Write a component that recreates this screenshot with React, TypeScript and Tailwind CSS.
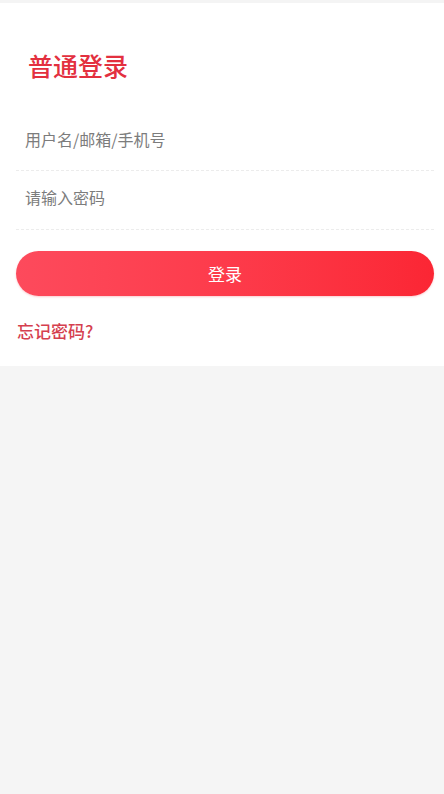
import { useState } from "react";

const App = () => {
  const [account, setAccount] = useState("");
  const [password, setPassword] = useState("");

  return (
    <div
      className="min-h-[794px] flex flex-col bg-[#f5f5f5]"
      style={{ fontFamily: '"Noto Sans CJK SC", "Noto Sans", sans-serif' }}
    >
      <div className="bg-white border-t-[3px] border-[#f4f4f4] pl-4 pr-[10px] pb-[21px]">
        <h1 className="pl-3 pt-[42px] text-[25px] leading-[40px] text-[#e3303f] font-medium">普通登录</h1>

        <div className="mt-[28px]">
          <div className="h-[58px] flex items-center pb-[6px] border-b border-dashed border-[#ececec]">
            <input
              type="text"
              placeholder="用户名/邮箱/手机号"
              value={account}
              onChange={(e) => setAccount(e.target.value)}
              className="w-full bg-transparent pl-[9px] text-[16px] text-[#333] placeholder:text-[#7c7c7c] focus:outline-none"
            />
          </div>
          <div className="h-[59px] flex items-center pb-[6px] border-b border-dashed border-[#ececec]">
            <input
              type="password"
              placeholder="请输入密码"
              value={password}
              onChange={(e) => setPassword(e.target.value)}
              className="w-full bg-transparent pl-[9px] text-[16px] text-[#333] placeholder:text-[#7c7c7c] focus:outline-none"
            />
          </div>
        </div>

        <button
          type="button"
          className="mt-[21px] w-full h-[45px] rounded-full bg-gradient-to-r from-[#fd4a5c] via-[#fd3b4b] to-[#fb2634] text-white text-[17px] shadow-[0_1px_2px_rgba(240,60,70,0.25)]"
        >
          登录
        </button>

        <div className="mt-[21px] pl-[1px]">
          <a href="#" className="text-[17px] leading-[28px] text-[#d53f4f] font-medium">
            忘记密码?
          </a>
        </div>
      </div>
      <div className="flex-1" />
    </div>
  );
};

export default App;
